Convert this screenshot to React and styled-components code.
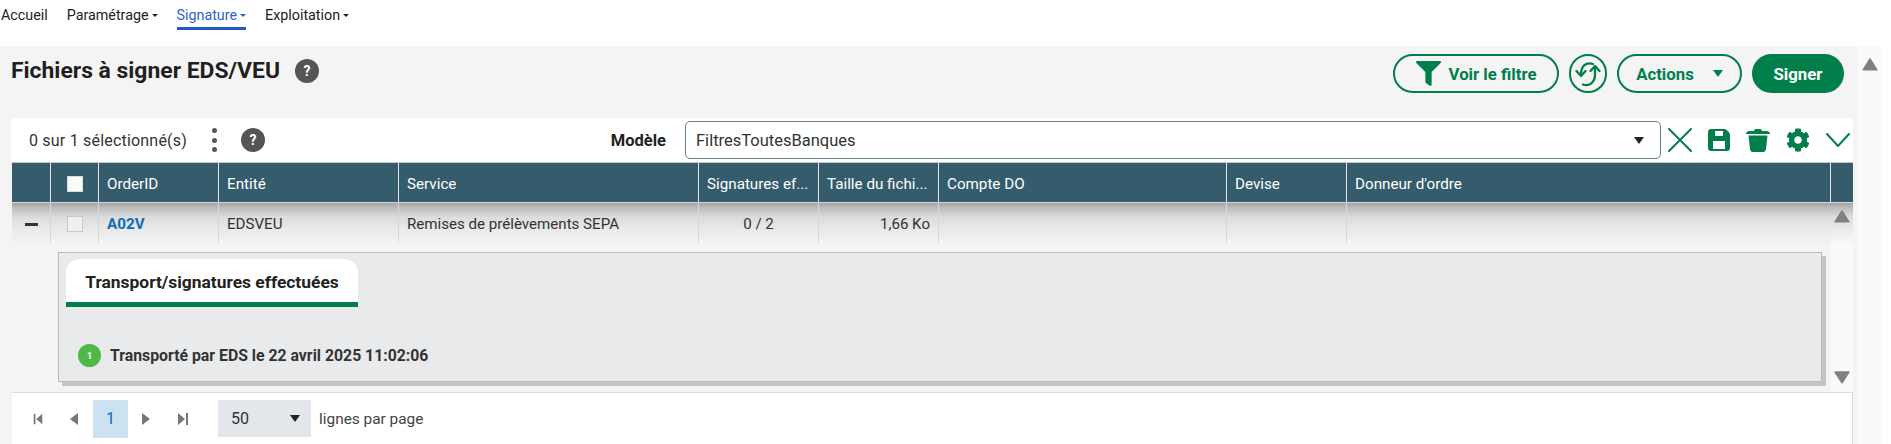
import React from 'react';
import styled, { createGlobalStyle } from 'styled-components';
import { FaFilter, FaCog } from 'react-icons/fa';

const GREEN = '#007f4b';
const HEAD = '#345c6c';
const FADE = '#a2a2a2 0, #bebebe 5px, #dcdcdc 14px, #e9e9e9 26px';

const Global = createGlobalStyle`
  html, body { margin: 0; padding: 0; background: #fff; overflow: hidden; }
  body { font-family: Roboto, "Liberation Sans", sans-serif; color: #222; }
  * { box-sizing: border-box; }
`;

const Page = styled.div`
  width: 1891px;
  height: 444px;
  display: flex;
  flex-direction: column;
  overflow: hidden;
`;

const Nav = styled.nav`
  height: 46px;
  display: flex;
  align-items: flex-start;
  padding-left: 1px;
  gap: 19px;
`;

const NavItem = styled.a`
  height: 30px;
  display: flex;
  align-items: center;
  gap: 3px;
  padding-top: 3px;
  font-size: 14.3px;
  color: ${p => (p.$active ? '#2f62c8' : '#222')};
  border-bottom: 3px solid ${p => (p.$active ? '#2358c4' : 'transparent')};
`;

const NavCaret = styled.span`
  width: 0;
  height: 0;
  border-left: 3px solid transparent;
  border-right: 3px solid transparent;
  border-top: 3px solid currentColor;
`;

const Body = styled.div`
  flex: 1;
  display: flex;
  min-height: 0;
`;

const Main = styled.main`
  width: 1858px;
  background: #f4f4f4;
  padding: 0 5px 0 11px;
  display: flex;
  flex-direction: column;
`;

const PageScroll = styled.div`
  width: 24px;
  background: #fafafa;
  padding-top: 12px;
  display: flex;
  justify-content: center;
`;

const TitleBar = styled.div`
  height: 72px;
  display: flex;
  justify-content: space-between;
  padding-right: 9px;
`;

const TitleGroup = styled.div`
  display: flex;
  align-items: center;
  height: 50px;
  gap: 15px;
`;

const Title = styled.h1`
  margin: 0 0 2px;
  font-size: 22.9px;
  font-weight: 700;
  color: #1f1f1f;
`;

const Help = styled.span`
  width: 24px;
  height: 24px;
  border-radius: 50%;
  background: #555;
  color: #fff;
  display: flex;
  align-items: center;
  justify-content: center;
  font-size: 14px;
  font-weight: 700;
`;

const Actions = styled.div`
  display: flex;
  gap: 10px;
  padding-top: 8px;
`;

const Pill = styled.button`
  height: 39px;
  width: ${p => p.$w}px;
  border-radius: 20px;
  border: 2px solid ${GREEN};
  background: ${p => (p.$solid ? GREEN : 'transparent')};
  color: ${p => (p.$solid ? '#fff' : GREEN)};
  font: 700 16.8px Roboto, sans-serif;
  display: flex;
  align-items: center;
  justify-content: center;
  gap: ${p => p.$gap || 0}px;
  padding: 0;
`;

const Panel = styled.section`
  flex: 1;
  display: flex;
  flex-direction: column;
  min-height: 0;
`;

const Toolbar = styled.div`
  height: 45px;
  background: #fff;
  border-bottom: 1px solid #c9c9c9;
  display: flex;
  align-items: center;
  padding-left: 18px;
`;

const Count = styled.span`
  font-size: 16px;
  letter-spacing: 0.2px;
  color: #333;
  width: 171px;
  white-space: nowrap;
`;

const Kebab = styled.span`
  width: 6px;
  height: 24px;
  margin: 0 0 0 11px;
  display: flex;
  flex-direction: column;
  justify-content: space-between;
  align-items: center;
  & > i { width: 5px; height: 5px; border-radius: 50%; background: #555; }
`;

const ToolbarHelp = styled(Help)`
  margin-left: 24px;
`;

const ModelLabel = styled.label`
  margin-left: auto;
  font-size: 16.5px;
  font-weight: 700;
  color: #222;
  margin-right: 19px;
`;

const ModelSelect = styled.div`
  width: 976px;
  height: 38px;
  border: 1px solid #64808f;
  border-radius: 5px;
  padding: 0 16px 0 10px;
  display: flex;
  align-items: center;
  justify-content: space-between;
  font-size: 16.5px;
  color: #333;
`;

const Caret = styled.span`
  width: 0;
  height: 0;
  border-left: ${p => p.$s || 5}px solid transparent;
  border-right: ${p => p.$s || 5}px solid transparent;
  border-top: ${p => (p.$s || 5) + 2}px solid ${p => p.$c || '#222'};
`;

const ToolIcons = styled.div`
  width: 192px;
  display: flex;
  align-items: center;
  gap: 16px;
  padding-left: 7px;
  color: ${GREEN};
  & > svg { flex: none; }
`;

const HeaderRow = styled.div`
  display: grid;
  grid-template-columns: ${p => p.$cols};
  height: 40px;
  background: ${HEAD};
  margin-left: 1px;
  border-bottom: 1px solid #d8d8d8;
`;

const HeadCell = styled.div`
  border-right: 1px solid #e6e6e6;
  color: #fff;
  font-size: 15.2px;
  padding: 2px 8px 0;
  display: flex;
  align-items: center;
  justify-content: ${p => (p.$center ? 'center' : 'flex-start')};
  white-space: nowrap;
  overflow: hidden;
  &:last-child { border-right: none; }
`;

const HeadCheck = styled.span`
  width: 16px;
  height: 16px;
  background: #fafafa;
  border: 1px solid #ddd;
`;

const BodyWrap = styled.div`
  flex: 1;
  display: flex;
  min-height: 0;
  margin-left: 1px;
  background: linear-gradient(${FADE}, #f4f4f4 42px);
`;

const BodyMain = styled.div`
  flex: 1;
  min-width: 0;
  display: flex;
  flex-direction: column;
`;

const TableScroll = styled.div`
  width: 22px;
  background: linear-gradient(${FADE}, #fafafa 42px);
  display: flex;
  flex-direction: column;
  align-items: center;
  justify-content: space-between;
  padding: 7px 0 8px;
`;

const Row = styled.div`
  display: grid;
  grid-template-columns: ${p => p.$cols};
  height: 40px;
`;

const Cell = styled.div`
  border-right: 1px solid #d8d8d8;
  font-size: 15.1px;
  color: #333;
  padding: 2px 8px 0;
  display: flex;
  align-items: center;
  justify-content: ${p => p.$align || 'flex-start'};
  &:last-child { border-right: none; }
`;

const OrderLink = styled.a`
  color: #0f6cb6;
  font-weight: 700;
  font-size: 15.2px;
`;

const Minus = styled.span`
  width: 13px;
  height: 3px;
  background: #333;
`;

const RowCheck = styled.span`
  width: 16px;
  height: 16px;
  background: #f0f0f0;
  border: 1px solid #c9c9c9;
`;

const Detail = styled.div`
  margin: 9px 0 0 46px;
  width: 1764px;
  height: 130px;
  background: #e9eaec;
  border: 1px solid #bcbcbc;
  box-shadow: 4px 4px 0 #c3c4c7;
  padding: 6px 7px 0;
`;

const TabBar = styled.div`
  border-bottom: 1px solid #e3e8e7;
  height: 48px;
`;

const Tab = styled.div`
  width: 292px;
  height: 48px;
  padding-top: 3px;
  background: #fff;
  border-radius: 14px 14px 0 0;
  border-bottom: 5px solid ${GREEN};
  display: flex;
  align-items: center;
  justify-content: center;
  font-size: 17.4px;
  font-weight: 700;
  color: #222;
`;

const Step = styled.div`
  margin: 37px 0 0 12px;
  display: flex;
  align-items: center;
  gap: 9px;
  font-size: 15.8px;
  font-weight: 700;
  color: #333;
`;

const Badge = styled.span`
  width: 23px;
  height: 23px;
  border-radius: 50%;
  background: #4fb848;
  color: #fff;
  font-size: 9px;
  font-weight: 700;
  display: flex;
  align-items: center;
  justify-content: center;
`;

const Footer = styled.footer`
  height: 52px;
  background: #fff;
  border-top: 1px solid #dedede;
  border-right: 1px solid #dedede;
  margin: 0 0 0 1px;
  display: flex;
  align-items: center;
  padding-left: 20px;
`;

const PagerBtn = styled.span`
  width: ${p => p.$w || 30}px;
  padding-left: ${p => p.$pl || 0}px;
  display: flex;
  justify-content: center;
  color: #777;
`;

const PageNo = styled.span`
  width: 35px;
  height: 38px;
  background: #cbe2f2;
  color: #0f6cb6;
  font-size: 16px;
  display: flex;
  align-items: center;
  justify-content: center;
`;

const SizeSelect = styled.div`
  width: 93px;
  height: 37px;
  background: #e3e6ea;
  margin: 0 8px 0 15px;
  padding: 0 11px 0 13px;
  display: flex;
  align-items: center;
  justify-content: space-between;
  font-size: 16px;
  color: #333;
`;

const PerPage = styled.span`
  font-size: 15.4px;
  color: #444;
`;

const Arrow = ({ up, size = 16, color = '#808080' }) => (
  <svg width={size} height={size * 0.8} viewBox="0 0 16 13">
    <path d={up ? 'M8 1 L15 12 H1 Z' : 'M1 1 H15 L8 12 Z'} fill={color} stroke={color} strokeWidth="1.5" strokeLinejoin="round" />
  </svg>
);

const PagerIcon = ({ kind }) => {
  const paths = {
    first: 'M2 1h2v12H2z M12 1v12L5 7z',
    prev: 'M10 1v12L2 7z',
    next: 'M3 1v12l8-6z',
    last: 'M2 1v12l7-6z M10 1h2v12h-2z',
  };
  return (
    <svg width="14" height="14" viewBox="0 0 14 14" fill="currentColor">
      <path d={paths[kind]} />
    </svg>
  );
};

const RefreshIcon = () => (
  <svg width="26" height="28" viewBox="0 0 26 28" fill="none" stroke={GREEN} strokeWidth="2.3" strokeLinecap="round" strokeLinejoin="round">
    <path d="M18 4 C11 1.5 6 6 6 15" />
    <path d="M1.5 11 L6 16 L10.5 11" />
    <path d="M20 7 V15 C20 22 14 27 8 24.5" />
    <path d="M15.5 11 L20 6 L24.5 11" />
  </svg>
);

const CloseIcon = () => (
  <svg width="24" height="24" viewBox="0 0 24 24" stroke={GREEN} strokeWidth="2" strokeLinecap="round">
    <path d="M1 1 L23 23 M23 1 L1 23" />
  </svg>
);

const ChevronIcon = () => (
  <svg width="24" height="14" viewBox="0 0 24 14" fill="none" stroke={GREEN} strokeWidth="2" strokeLinecap="round">
    <path d="M1 1 L12 13 L23 1" />
  </svg>
);

const SaveIcon = () => (
  <svg width="22" height="22" viewBox="0 0 22 22" fill={GREEN} fillRule="evenodd">
    <path d="M3 0 H17 Q22 3 22 6 V19 Q22 22 19 22 H3 Q0 22 0 19 V3 Q0 0 3 0 Z M7 2 V7 H15 V2 Z M5 12 V20 H17 V12 Z" />
  </svg>
);

const TrashIcon = () => (
  <svg width="24" height="23" viewBox="0 0 24 23" fill={GREEN}>
    <path d="M8 2 Q8 0 10 0 H14 Q16 0 16 2 H21 Q24 2.5 24 5 H0 Q0 2.5 3 2 Z" />
    <path d="M2.5 6.5 H21.5 L20 20 Q19.7 23 17 23 H7 Q4.3 23 4 20 Z" />
  </svg>
);

const COLS = '39px 48px 120px 180px 300px 120px 120px 288px 120px 484px 22px';
const BODY_COLS = '39px 48px 120px 180px 300px 120px 120px 288px 120px 484px';

const heads = ['OrderID', 'Entité', 'Service', 'Signatures ef...', 'Taille du fichi...', 'Compte DO', 'Devise', "Donneur d'ordre"];

export default function App() {
  return (
    <Page>
      <Global />
      <Nav>
        <NavItem>Accueil</NavItem>
        <NavItem>Paramétrage <NavCaret /></NavItem>
        <NavItem $active>Signature <NavCaret /></NavItem>
        <NavItem>Exploitation <NavCaret /></NavItem>
      </Nav>
      <Body>
        <Main>
          <TitleBar>
            <TitleGroup>
              <Title>Fichiers à signer EDS/VEU</Title>
              <Help>?</Help>
            </TitleGroup>
            <Actions>
              <Pill $w={166} $gap={8}><FaFilter size={25} />Voir le filtre</Pill>
              <Pill $w={38}><RefreshIcon /></Pill>
              <Pill $w={125} $gap={19}>Actions<Caret $c={GREEN} $s={5} /></Pill>
              <Pill $w={92} $solid>Signer</Pill>
            </Actions>
          </TitleBar>
          <Panel>
            <Toolbar>
              <Count>0 sur 1 sélectionné(s)</Count>
              <Kebab><i /><i /><i /></Kebab>
              <ToolbarHelp>?</ToolbarHelp>
              <ModelLabel>Modèle</ModelLabel>
              <ModelSelect>FiltresToutesBanques<Caret /></ModelSelect>
              <ToolIcons>
                <CloseIcon />
                <SaveIcon />
                <TrashIcon />
                <FaCog size={24} />
                <ChevronIcon />
              </ToolIcons>
            </Toolbar>
            <HeaderRow $cols={COLS}>
              <HeadCell />
              <HeadCell $center><HeadCheck /></HeadCell>
              {heads.map(h => <HeadCell key={h}>{h}</HeadCell>)}
              <HeadCell />
            </HeaderRow>
            <BodyWrap>
              <BodyMain>
                <Row $cols={BODY_COLS}>
                  <Cell $align="center"><Minus /></Cell>
                  <Cell $align="center"><RowCheck /></Cell>
                  <Cell><OrderLink>A02V</OrderLink></Cell>
                  <Cell>EDSVEU</Cell>
                  <Cell>Remises de prélèvements SEPA</Cell>
                  <Cell $align="center">0 / 2</Cell>
                  <Cell $align="flex-end">1,66 Ko</Cell>
                  <Cell />
                  <Cell />
                  <Cell />
                </Row>
                <Detail>
                  <TabBar><Tab>Transport/signatures effectuées</Tab></TabBar>
                  <Step><Badge>1</Badge>Transporté par EDS le 22 avril 2025 11:02:06</Step>
                </Detail>
              </BodyMain>
              <TableScroll><Arrow up /><Arrow /></TableScroll>
            </BodyWrap>
            <Footer>
              <PagerBtn $w={12}><PagerIcon kind="first" /></PagerBtn>
              <PagerBtn $w={49} $pl={13}><PagerIcon kind="prev" /></PagerBtn>
              <PageNo>1</PageNo>
              <PagerBtn $w={35}><PagerIcon kind="next" /></PagerBtn>
              <PagerBtn $w={40}><PagerIcon kind="last" /></PagerBtn>
              <SizeSelect>50<Caret $s={5} /></SizeSelect>
              <PerPage>lignes par page</PerPage>
            </Footer>
          </Panel>
        </Main>
        <PageScroll><Arrow up /></PageScroll>
      </Body>
    </Page>
  );
}
